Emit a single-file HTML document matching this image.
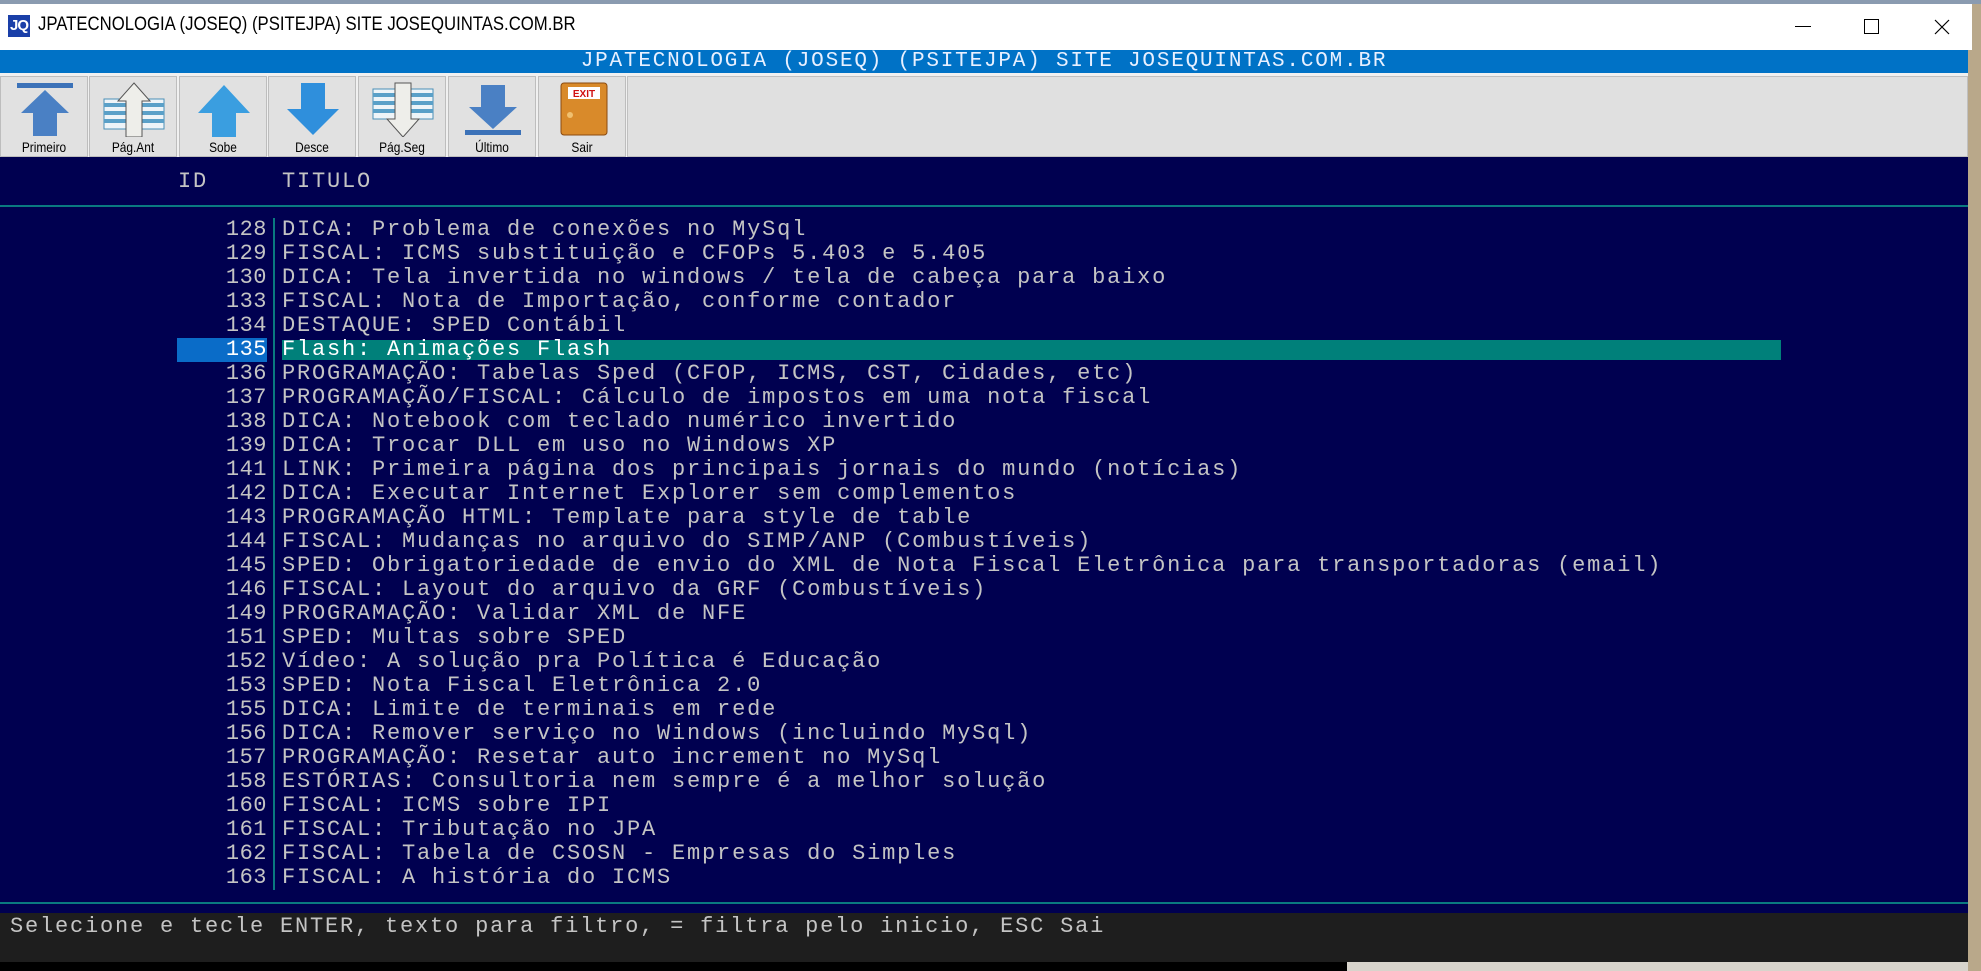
<!DOCTYPE html>
<html><head><meta charset="utf-8"><style>
*{margin:0;padding:0;box-sizing:border-box}
body{width:1981px;height:971px;overflow:hidden;background:#b9a88a;position:relative;font-family:"Liberation Sans",sans-serif}
.abs{position:absolute}
.mono{font-family:"Liberation Mono",monospace;font-size:22px;letter-spacing:1.8px;white-space:pre;line-height:24px}
.row{position:absolute;left:0;height:24px;width:1968px;color:#c4c4c4}
.row .n{position:absolute;left:178px;width:89px;text-align:right;letter-spacing:0.5px}
.row .t{position:absolute;left:282px}
.btn{position:absolute;top:76px;width:88px;height:81px;background:#e1e1e1;border:1px solid #bdbdbd;font-size:14px;text-align:center;color:#000}
.btn span{position:absolute;left:0;right:0;top:62px;transform:scaleX(.85)}
.btn svg{position:absolute;left:12px;top:4px}
</style></head><body>
<div class="abs" style="left:0;top:0;width:1981px;height:4px;background:#8a9bb0"></div>
<div class="abs" style="left:0;top:4px;width:1972px;height:46px;background:#fff"></div>
<div class="abs" style="left:8px;top:15px;width:22px;height:22px;background:#1a3fa8;color:#fff;font-weight:bold;font-size:15px;line-height:22px;text-align:center;letter-spacing:-1px">JQ</div>
<div class="abs" style="left:38px;top:14px;font-size:19px;color:#000;transform:scaleX(.88);transform-origin:left">JPATECNOLOGIA (JOSEQ) (PSITEJPA) SITE JOSEQUINTAS.COM.BR</div>
<div class="abs" style="left:1795px;top:26px;width:16px;height:1px;background:#000"></div>
<div class="abs" style="left:1864px;top:19px;width:15px;height:15px;border:1px solid #000"></div>
<svg class="abs" style="left:1934px;top:19px" width="16" height="16"><path d="M1 1L15 15M15 1L1 15" stroke="#000" stroke-width="1.2"/></svg>
<div class="abs" style="left:0;top:50px;width:1968px;height:23px;background:#0072c6"></div>
<div class="abs mono" style="left:0;top:50px;width:1968px;text-align:center;color:#e8f0ff;font-size:21px;line-height:23px">JPATECNOLOGIA (JOSEQ) (PSITEJPA) SITE JOSEQUINTAS.COM.BR</div>
<div class="abs" style="left:0;top:73px;width:1968px;height:84px;background:#f0f0f0"></div>
<div class="abs" style="left:627px;top:76px;width:1341px;height:81px;background:#e0e0e0;border:1px solid #c0c0c0"></div>
<div class="btn" style="left:0"><svg width="64" height="56"><rect x="4" y="2" width="56" height="5" fill="#3c72b8"/><path d="M32 9L56 32H44V55H20V32H8Z" fill="#4a80c4"/></svg><span>Primeiro</span></div>
<div class="btn" style="left:89px"><svg width="64" height="56"><g fill="#5aa0c8"><rect x="2" y="18" width="60" height="30" fill="#eef4f8" stroke="#4a90b8"/><rect x="2" y="22" width="60" height="4"/><rect x="2" y="30" width="60" height="4"/><rect x="2" y="38" width="60" height="4"/></g><path d="M32 2L48 20H40V56H24V20H16Z" fill="#eeeeea" stroke="#555"/></svg><span>Pág.Ant</span></div>
<div class="btn" style="left:179px"><svg width="64" height="56"><path d="M32 4L58 32H44V56H20V32H6Z" fill="#3a9ee0"/></svg><span>Sobe</span></div>
<div class="btn" style="left:268px"><svg width="64" height="56"><path d="M20 2H44V28H58L32 54L6 28H20Z" fill="#2f8fdc"/></svg><span>Desce</span></div>
<div class="btn" style="left:358px"><svg width="64" height="56"><g fill="#5aa0c8"><rect x="2" y="8" width="60" height="30" fill="#eef4f8" stroke="#4a90b8"/><rect x="2" y="12" width="60" height="4"/><rect x="2" y="20" width="60" height="4"/><rect x="2" y="28" width="60" height="4"/></g><path d="M24 2H40V38H48L32 56L16 38H24Z" fill="#eeeeea" stroke="#555"/></svg><span>Pág.Seg</span></div>
<div class="btn" style="left:448px"><svg width="64" height="56"><path d="M20 4H44V26H56L32 48L8 26H20Z" fill="#4a80c4"/><rect x="4" y="49" width="56" height="5" fill="#3c72b8"/></svg><span>Último</span></div>
<div class="btn" style="left:538px"><svg width="64" height="56"><rect x="10" y="2" width="46" height="52" rx="3" fill="#d98a2a" stroke="#8a4a10"/><rect x="17" y="6" width="32" height="12" fill="#fff"/><text x="33" y="16" font-size="10" font-weight="bold" fill="#d01010" text-anchor="middle" font-family="Liberation Sans">EXIT</text><circle cx="19" cy="34" r="3" fill="#f0c070"/></svg><span>Sair</span></div>
<div class="abs" style="left:0;top:157px;width:1968px;height:756px;background:#000050"></div>
<div class="abs mono" style="left:178px;top:170px;color:#c4c4c4">ID</div>
<div class="abs mono" style="left:282px;top:170px;color:#c4c4c4">TITULO</div>
<div class="abs" style="left:0;top:205px;width:1968px;height:2px;background:#0a7a80"></div>
<div class="abs" style="left:273px;top:218px;width:2px;height:672px;background:#0a7a80"></div>
<div class="abs" style="left:177px;top:338px;width:90px;height:24px;background:#0a6cc8"></div>
<div class="abs" style="left:282px;top:340px;width:1499px;height:20px;background:#00807a"></div>
<div class="mono">
<div class="row" style="top:218px"><span class="n">128</span><span class="t">DICA: Problema de conexões no MySql</span></div>
<div class="row" style="top:242px"><span class="n">129</span><span class="t">FISCAL: ICMS substituição e CFOPs 5.403 e 5.405</span></div>
<div class="row" style="top:266px"><span class="n">130</span><span class="t">DICA: Tela invertida no windows / tela de cabeça para baixo</span></div>
<div class="row" style="top:290px"><span class="n">133</span><span class="t">FISCAL: Nota de Importação, conforme contador</span></div>
<div class="row" style="top:314px"><span class="n">134</span><span class="t">DESTAQUE: SPED Contábil</span></div>
<div class="row" style="top:338px;color:#fff"><span class="n">135</span><span class="t">Flash: Animações Flash</span></div>
<div class="row" style="top:362px"><span class="n">136</span><span class="t">PROGRAMAÇÃO: Tabelas Sped (CFOP, ICMS, CST, Cidades, etc)</span></div>
<div class="row" style="top:386px"><span class="n">137</span><span class="t">PROGRAMAÇÃO/FISCAL: Cálculo de impostos em uma nota fiscal</span></div>
<div class="row" style="top:410px"><span class="n">138</span><span class="t">DICA: Notebook com teclado numérico invertido</span></div>
<div class="row" style="top:434px"><span class="n">139</span><span class="t">DICA: Trocar DLL em uso no Windows XP</span></div>
<div class="row" style="top:458px"><span class="n">141</span><span class="t">LINK: Primeira página dos principais jornais do mundo (notícias)</span></div>
<div class="row" style="top:482px"><span class="n">142</span><span class="t">DICA: Executar Internet Explorer sem complementos</span></div>
<div class="row" style="top:506px"><span class="n">143</span><span class="t">PROGRAMAÇÃO HTML: Template para style de table</span></div>
<div class="row" style="top:530px"><span class="n">144</span><span class="t">FISCAL: Mudanças no arquivo do SIMP/ANP (Combustíveis)</span></div>
<div class="row" style="top:554px"><span class="n">145</span><span class="t">SPED: Obrigatoriedade de envio do XML de Nota Fiscal Eletrônica para transportadoras (email)</span></div>
<div class="row" style="top:578px"><span class="n">146</span><span class="t">FISCAL: Layout do arquivo da GRF (Combustíveis)</span></div>
<div class="row" style="top:602px"><span class="n">149</span><span class="t">PROGRAMAÇÃO: Validar XML de NFE</span></div>
<div class="row" style="top:626px"><span class="n">151</span><span class="t">SPED: Multas sobre SPED</span></div>
<div class="row" style="top:650px"><span class="n">152</span><span class="t">Vídeo: A solução pra Política é Educação</span></div>
<div class="row" style="top:674px"><span class="n">153</span><span class="t">SPED: Nota Fiscal Eletrônica 2.0</span></div>
<div class="row" style="top:698px"><span class="n">155</span><span class="t">DICA: Limite de terminais em rede</span></div>
<div class="row" style="top:722px"><span class="n">156</span><span class="t">DICA: Remover serviço no Windows (incluindo MySql)</span></div>
<div class="row" style="top:746px"><span class="n">157</span><span class="t">PROGRAMAÇÃO: Resetar auto increment no MySql</span></div>
<div class="row" style="top:770px"><span class="n">158</span><span class="t">ESTÓRIAS: Consultoria nem sempre é a melhor solução</span></div>
<div class="row" style="top:794px"><span class="n">160</span><span class="t">FISCAL: ICMS sobre IPI</span></div>
<div class="row" style="top:818px"><span class="n">161</span><span class="t">FISCAL: Tributação no JPA</span></div>
<div class="row" style="top:842px"><span class="n">162</span><span class="t">FISCAL: Tabela de CSOSN - Empresas do Simples</span></div>
<div class="row" style="top:866px"><span class="n">163</span><span class="t">FISCAL: A história do ICMS</span></div>
</div>
<div class="abs" style="left:0;top:902px;width:1968px;height:2px;background:#0a7a80"></div>
<div class="abs" style="left:0;top:913px;width:1968px;height:49px;background:#1e1e1e"></div>
<div class="abs mono" style="left:10px;top:915px;color:#c4c4c4">Selecione e tecle ENTER, texto para filtro, = filtra pelo inicio, ESC Sai</div>
<div class="abs" style="left:0;top:962px;width:1347px;height:9px;background:#000"></div>
<div class="abs" style="left:1347px;top:962px;width:621px;height:9px;background:#d8d4cc"></div>
</body></html>
